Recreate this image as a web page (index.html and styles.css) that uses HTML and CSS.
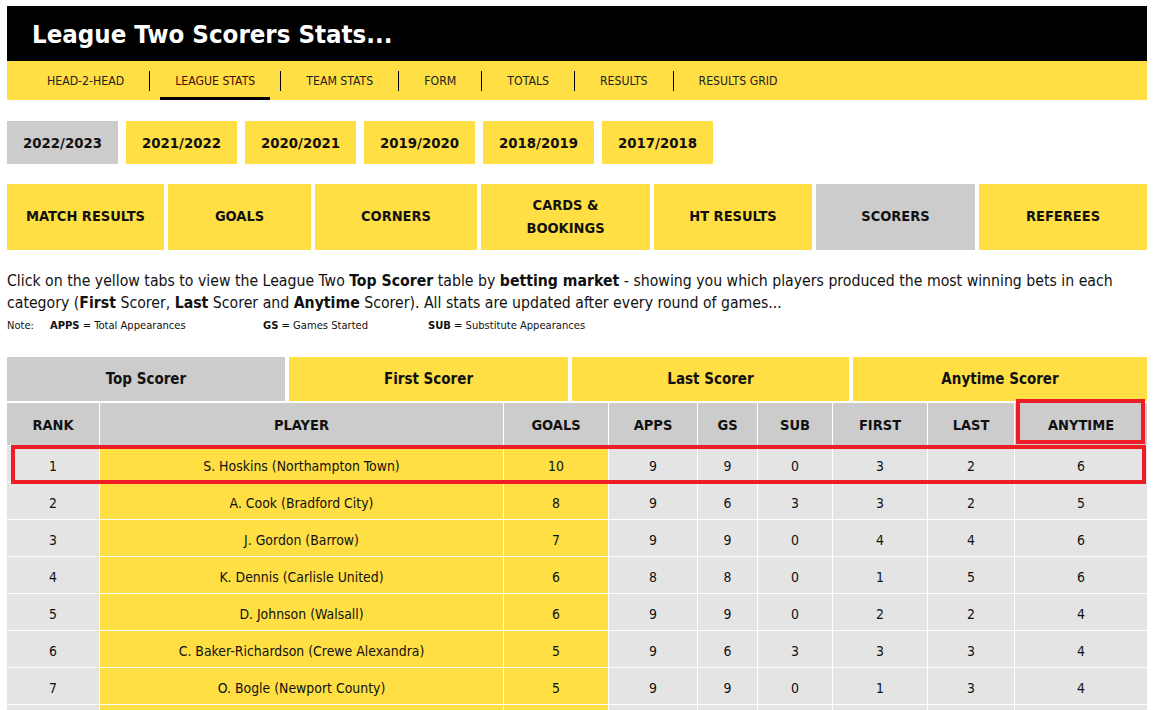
FILE: index.html
```html
<!DOCTYPE html>
<html lang="en">
<head>
<meta charset="utf-8">
<title>League Two Scorers Stats</title>
<link rel="stylesheet" href="styles.css">
</head>
<body>
<div class="page">
  <header class="title-bar">
    <h1 class="title">League Two Scorers Stats...</h1>
  </header>
  <nav class="nav">
    <a class="nav-item">HEAD-2-HEAD</a>
    <span class="nav-sep"></span>
    <a class="nav-item active">LEAGUE STATS</a>
    <span class="nav-sep"></span>
    <a class="nav-item">TEAM STATS</a>
    <span class="nav-sep"></span>
    <a class="nav-item">FORM</a>
    <span class="nav-sep"></span>
    <a class="nav-item">TOTALS</a>
    <span class="nav-sep"></span>
    <a class="nav-item">RESULTS</a>
    <span class="nav-sep"></span>
    <a class="nav-item">RESULTS GRID</a>
  </nav>

  <div class="seasons">
    <a class="season active">2022/2023</a>
    <a class="season">2021/2022</a>
    <a class="season">2020/2021</a>
    <a class="season">2019/2020</a>
    <a class="season">2018/2019</a>
    <a class="season">2017/2018</a>
  </div>

  <div class="cats">
    <a class="cat">MATCH RESULTS</a>
    <a class="cat">GOALS</a>
    <a class="cat">CORNERS</a>
    <a class="cat">CARDS &amp;<br>BOOKINGS</a>
    <a class="cat">HT RESULTS</a>
    <a class="cat active">SCORERS</a>
    <a class="cat">REFEREES</a>
  </div>

  <p class="intro">Click on the yellow tabs to view the League Two <b>Top Scorer</b> table by <b>betting market</b> - showing you which players produced the most winning bets in each category (<b>First</b> Scorer, <b>Last</b> Scorer and <b>Anytime</b> Scorer). All stats are updated after every round of games...</p>

  <div class="note">
    <span class="note-label">Note:</span><span class="note-apps"><b>APPS</b> = Total Appearances</span><span class="note-gs"><b>GS</b> = Games Started</span><span class="note-sub"><b>SUB</b> = Substitute Appearances</span>
  </div>

  <div class="scorer-tabs">
    <a class="stab active">Top Scorer</a>
    <a class="stab">First Scorer</a>
    <a class="stab">Last Scorer</a>
    <a class="stab">Anytime Scorer</a>
  </div>

  <div class="table-wrap">
    <table class="stats">
      <colgroup>
        <col class="c-rank"><col class="c-player"><col class="c-goals"><col class="c-apps"><col class="c-gs"><col class="c-sub"><col class="c-first"><col class="c-last"><col class="c-any">
      </colgroup>
      <thead>
        <tr>
          <th>RANK</th><th>PLAYER</th><th>GOALS</th><th>APPS</th><th>GS</th><th>SUB</th><th>FIRST</th><th>LAST</th><th>ANYTIME</th>
        </tr>
      </thead>
      <tbody>
        <tr><td>1</td><td class="y">S. Hoskins (Northampton Town)</td><td class="y">10</td><td>9</td><td>9</td><td>0</td><td>3</td><td>2</td><td>6</td></tr>
        <tr><td>2</td><td class="y">A. Cook (Bradford City)</td><td class="y">8</td><td>9</td><td>6</td><td>3</td><td>3</td><td>2</td><td>5</td></tr>
        <tr><td>3</td><td class="y">J. Gordon (Barrow)</td><td class="y">7</td><td>9</td><td>9</td><td>0</td><td>4</td><td>4</td><td>6</td></tr>
        <tr><td>4</td><td class="y">K. Dennis (Carlisle United)</td><td class="y">6</td><td>8</td><td>8</td><td>0</td><td>1</td><td>5</td><td>6</td></tr>
        <tr><td>5</td><td class="y">D. Johnson (Walsall)</td><td class="y">6</td><td>9</td><td>9</td><td>0</td><td>2</td><td>2</td><td>4</td></tr>
        <tr><td>6</td><td class="y">C. Baker-Richardson (Crewe Alexandra)</td><td class="y">5</td><td>9</td><td>6</td><td>3</td><td>3</td><td>3</td><td>4</td></tr>
        <tr><td>7</td><td class="y">O. Bogle (Newport County)</td><td class="y">5</td><td>9</td><td>9</td><td>0</td><td>1</td><td>3</td><td>4</td></tr>
        <tr><td>&nbsp;</td><td class="y">&nbsp;</td><td class="y">&nbsp;</td><td>&nbsp;</td><td>&nbsp;</td><td>&nbsp;</td><td>&nbsp;</td><td>&nbsp;</td><td>&nbsp;</td></tr>
      </tbody>
    </table>
    <div class="hl hl-col"></div>
    <div class="hl hl-row"></div>
  </div>
</div>
</body>
</html>
```

FILE: styles.css
```css
* { box-sizing: border-box; }

html, body {
  margin: 0;
  padding: 0;
  background: #fff;
}

body {
  font-family: "DejaVu Sans Condensed", "DejaVu Sans", sans-serif;
  font-stretch: condensed;
  color: #111;
}

.page {
  width: 1140px;
  margin: 6px 0 0 7px;
}

a { color: inherit; text-decoration: none; cursor: pointer; }

/* Title bar */
.title-bar {
  background: #000;
  height: 55px;
  display: flex;
  align-items: center;
  padding-left: 25px;
}

.title {
  margin: 0;
  color: #fff;
  font-size: 25.6px;
  font-weight: 700;
}

/* Navigation */
.nav {
  background: #ffdf43;
  height: 39px;
  display: flex;
  align-items: center;
  padding-left: 15px;
}

.nav-item {
  height: 39px;
  display: flex;
  align-items: center;
  margin: 0 10px;
  padding: 3px 15px 0;
  font-size: 12.2px;
  color: #222;
  border-bottom: 3px solid transparent;
}

.nav-item.active {
  border-bottom-color: #000;
  color: #4a0a0a;
}

.nav-sep {
  width: 1px;
  height: 20px;
  background: #000;
}

/* Seasons */
.seasons {
  display: flex;
  gap: 8px;
  margin-top: 21px;
}

.season {
  width: 111px;
  height: 43px;
  background: #ffdf43;
  display: flex;
  align-items: center;
  justify-content: center;
  font-size: 14.8px;
  font-weight: 700;
  padding-bottom: 1px;
}

.season.active { background: #cccccc; }

/* Categories */
.cats {
  display: grid;
  grid-template-columns: 157px 143px 162px 169px 158px 159px 168px;
  gap: 4px;
  margin-top: 20px;
}

.cat {
  height: 66px;
  background: #ffdf43;
  display: flex;
  align-items: center;
  justify-content: center;
  text-align: center;
  font-size: 14.5px;
  font-weight: 700;
  line-height: 23px;
  padding-bottom: 1px;
}

.cat.active { background: #cccccc; }

/* Intro text */
.intro {
  margin: 20px 0 0;
  font-size: 15.7px;
  line-height: 22px;
}

.note {
  margin-top: 5px;
  font-size: 11.1px;
  line-height: 14px;
  display: flex;
}

.note-label { width: 43px; }
.note-apps { width: 213px; }
.note-gs { width: 165px; }

/* Scorer tabs */
.scorer-tabs {
  display: grid;
  grid-template-columns: 278px 279px 277px 294px;
  gap: 4px;
  margin-top: 24px;
  margin-bottom: 1px;
}

.stab {
  height: 44px;
  background: #ffdf43;
  display: flex;
  align-items: center;
  justify-content: center;
  font-size: 15px;
  font-weight: 700;
}

.stab.active { background: #cccccc; }

/* Table */
.table-wrap {
  position: relative;
}

.stats {
  width: 1142px;
  margin-left: -1px;
  table-layout: fixed;
  border-collapse: separate;
  border-spacing: 1px;
}

.c-rank { width: 92px; }
.c-player { width: 403px; }
.c-goals { width: 104px; }
.c-apps { width: 88px; }
.c-gs { width: 59px; }
.c-sub { width: 74px; }
.c-first { width: 94px; }
.c-last { width: 86px; }
.c-any { width: 132px; }

.stats th {
  background: #cccccc;
  height: 42px;
  padding: 1px 0 0;
  font-size: 14.5px;
  font-weight: 700;
  text-align: center;
}

.stats td {
  background: #e4e4e4;
  height: 36px;
  padding: 3px 0 0;
  font-size: 13.9px;
  text-align: center;
}

.stats td.y { background: #ffdf43; }

.hl {
  position: absolute;
  border: 4px solid #ee1c25;
  pointer-events: none;
}

.hl-col {
  left: 1009px;
  top: -3px;
  width: 129px;
  height: 45px;
}

.hl-row {
  left: 4px;
  top: 43px;
  width: 1135px;
  height: 39px;
}
```
